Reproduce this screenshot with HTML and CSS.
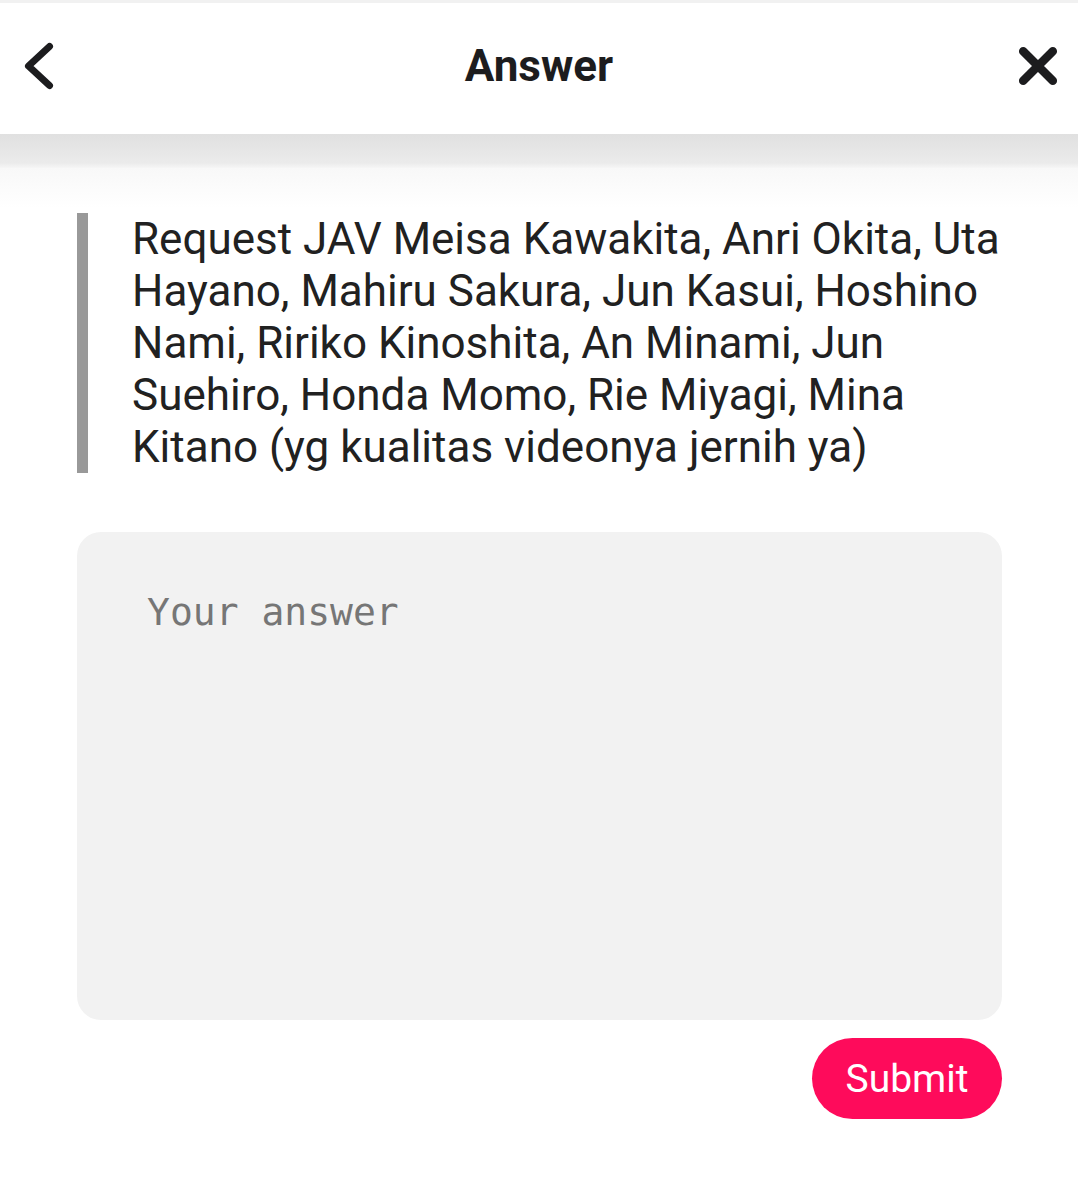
FILE: index.html
```html
<!DOCTYPE html>
<html lang="en">
<head>
    <meta charset="UTF-8">
    <meta name="viewport" content="width=device-width, initial-scale=1.0">
    <title>Answer</title>
    <link rel="stylesheet" href="styles.css">
</head>
<body>
    <div class="topbar">
        <button class="icon-btn" aria-label="Back">
            <svg width="40" height="56" viewBox="0 0 40 56">
                <path d="M29.5 8.5 L8.5 28 L29.5 47.5" fill="none" stroke="#1c1c1e" stroke-width="7" stroke-linecap="round" stroke-linejoin="round"/>
            </svg>
        </button>
        <h1>Answer</h1>
        <button class="icon-btn close" aria-label="Close">
            <svg width="44" height="44" viewBox="0 0 44 44">
                <path d="M7.2 7.2 L36.8 36.8 M36.8 7.2 L7.2 36.8" fill="none" stroke="#1c1c1e" stroke-width="8.5" stroke-linecap="round"/>
            </svg>
        </button>
    </div>
    <div class="shade"></div>

    <div class="content">
        <blockquote class="question">
            Request JAV Meisa Kawakita, Anri Okita, Uta Hayano, Mahiru Sakura, Jun Kasui, Hoshino Nami, Ririko Kinoshita, An Minami, Jun Suehiro, Honda Momo, Rie Miyagi, Mina Kitano (yg kualitas videonya jernih ya)
        </blockquote>
        <textarea class="answer" placeholder="Your answer"></textarea>
        <div class="actions">
            <button class="submit">Submit</button>
        </div>
    </div>
</body>
</html>
```

FILE: styles.css
```css
body {
    margin: 0;
    font-family: Roboto, "Liberation Sans", Arial, sans-serif;
    background: #fff;
    color: #222;
}
.topbar {
    height: 134px;
    display: flex;
    align-items: center;
    justify-content: space-between;
    padding: 0 18px 6px 20px;
    border-top: 3px solid #f1f1f1;
    box-sizing: border-box;
    position: relative;
}
.topbar h1 {
    position: absolute;
    left: 0;
    right: 0;
    margin: 0;
    text-align: center;
    font-size: 44px;
    font-weight: bold;
    color: #1c1c1e;
    pointer-events: none;
}
.icon-btn {
    background: none;
    border: none;
    padding: 0;
    display: flex;
    cursor: pointer;
}
.shade {
    height: 34px;
    background: linear-gradient(#e0e0e0, #ebebeb 85%, #f6f6f6);
}
.content {
    padding: 45px 76px 40px 77px;
    background: linear-gradient(#f8f8f8, #fff 40px);
}
.question {
    margin: 0 -8px 0 0;
    border-left: 11px solid #999;
    padding-left: 44px;
    font-size: 44px;
    line-height: 52px;
    color: #212121;
}
.answer {
    display: block;
    width: 100%;
    height: 488px;
    margin-top: 59px;
    box-sizing: border-box;
    border: none;
    border-radius: 24px;
    background: #f2f2f2;
    padding: 58px 70px;
    font-family: "DejaVu Sans Mono", monospace;
    font-size: 38px;
    resize: none;
    outline: none;
}
.answer::placeholder {
    color: #767676;
}
.actions {
    display: flex;
    justify-content: flex-end;
    margin-top: 18px;
}
.submit {
    width: 190px;
    height: 81px;
    border: none;
    border-radius: 41px;
    background: #fe0b5b;
    color: #fff;
    font-family: Roboto, "Liberation Sans", Arial, sans-serif;
    font-size: 39px;
    cursor: pointer;
}
```
